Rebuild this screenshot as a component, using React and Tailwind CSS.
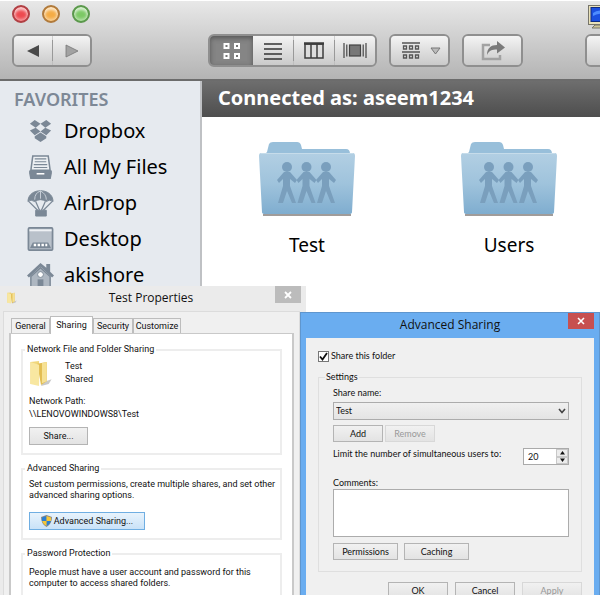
import React from "react";

function Light({ label, tone }) {
  return <button aria-label={label} className={`size-[18px] rounded-full border-2 shadow-[inset_0_3px_3px_rgba(255,255,255,0.7),inset_0_-2px_3px_rgba(255,255,255,0.45)] ${tone}`} />;
}

const toolButton = "flex items-center justify-center bg-linear-to-b from-[#f4f4f4] to-[#cacaca]";
const toolGroup = "flex h-[33px] shrink-0 overflow-hidden rounded-md border-2 border-[#8f8f8f]";

function Toolbar() {
  return (
    <header className="h-20 border-b-2 border-[#6c6c6c] bg-linear-to-b from-[#e8e8e8] to-[#b4b4b4]">
      <div className="flex h-[33px] items-start gap-3 px-3 pt-1">
        <Light label="Close" tone="border-[#b04044] bg-[#ee4a50]" />
        <Light label="Minimize" tone="border-[#b07a3c] bg-[#f5ac45]" />
        <Light label="Zoom" tone="border-[#5b984c] bg-[#7cc965]" />
        <svg viewBox="0 0 20 26" className="-mr-5 ml-auto h-[26px] w-5 shrink-0" aria-hidden="true">
          <rect x="0.5" y="0.5" width="30" height="19" fill="#e9e1b8" stroke="#77756a" />
          <rect x="3" y="2.500" width="28" height="14" fill="#1b4fe0" stroke="#102b80" />
          <path d="M5 8q5-4 14-2v4q-8-3-14 1z" fill="#4d8bff" />
          <path d="M7 20h14v3H4z" fill="#cfc59a" stroke="#77756a" />
        </svg>
      </div>
      <div className="flex pl-3">
        <div className={`${toolGroup} w-20`}>
          <button aria-label="Back" className={`${toolButton} w-[38px]`}>
            <svg width="14" height="14" viewBox="0 0 14 14"><path d="M13 1v12L1 7z" fill="#4a4a4a" /></svg>
          </button>
          <span className="my-1 w-px bg-[#999]" />
          <button aria-label="Forward" className={`${toolButton} flex-1`}>
            <svg width="14" height="14" viewBox="0 0 14 14"><path d="M1 1v12l12-6z" fill="#a2a2a2" stroke="#777" strokeWidth="0.8" /></svg>
          </button>
        </div>
        <div className={`${toolGroup} ml-[116px] w-[169px]`}>
          <button aria-label="Icon view" className="flex w-[43px] items-center justify-center bg-[#858585] shadow-[inset_0_2px_5px_#555]">
            <svg width="18" height="18" viewBox="0 0 18 18" fill="#777" stroke="#fff" strokeWidth="2"><path d="M1.500 2h4v4h-4zM12 2h4v4h-4zM1.500 12h4v4h-4zM12 12h4v4h-4z" /></svg>
          </button>
          <button aria-label="List view" className={`${toolButton} w-10`}>
            <svg width="18" height="18" viewBox="0 0 18 18" stroke="#333" strokeWidth="1.600"><path d="M0 2h18M0 7h18M0 12h18M0 17h18" /></svg>
          </button>
          <span className="my-1 w-px bg-[#999]" />
          <button aria-label="Column view" className={`${toolButton} w-10`}>
            <svg width="20" height="17" viewBox="0 0 20 17" fill="#ddd" stroke="#3c3c3c" strokeWidth="1.500"><path d="M1 2h18v14H1zM7 2v14M13 2v14" /><path d="M0 1.500h20" strokeWidth="2.500" /></svg>
          </button>
          <span className="my-1 w-px bg-[#999]" />
          <button aria-label="Cover flow view" className={`${toolButton} flex-1`}>
            <svg width="24" height="17" viewBox="0 0 24 17" stroke="#444" strokeWidth="1.200"><path d="M1 1v15M3.800 2.500v12M20.200 2.500v12M23 1v15" /><rect x="6.500" y="3" width="11" height="11" fill="#777" /></svg>
          </button>
        </div>
        <div className={`${toolGroup} ml-3 w-[61px]`}>
          <button aria-label="Arrange items" className={`${toolButton} w-full gap-2.5 pl-1`}>
            <svg width="18" height="18" viewBox="0 0 18 18" fill="none" stroke="#555" strokeWidth="1.300"><path d="M0 1h18M0 10h18M1.500 4h3v3h-3zM7.500 4h3v3h-3zM13.500 4h3v3h-3zM1.500 13h3v3h-3zM7.500 13h3v3h-3zM13.500 13h3v3h-3z" /></svg>
            <svg width="11" height="8" viewBox="0 0 11 8"><path d="M1 1h9L5.500 7z" fill="#bbb" stroke="#777" /></svg>
          </button>
        </div>
        <div className={`${toolGroup} ml-3 w-[61px]`}>
          <button aria-label="Share" className={`${toolButton} w-full`}>
            <svg width="26" height="22" viewBox="0 0 26 22"><path d="M10 5H3v14h17v-4" fill="none" stroke="#a2a2a2" strokeWidth="2.500" /><path d="M7 15C7 8 11 5 17 5V1l8 6.500-8 6V9.500c-5 0-8 1-10 5.500z" fill="#7a7a7a" /></svg>
          </button>
        </div>
        <div className="min-w-0 flex-1 overflow-hidden pl-[62px]">
          <div className={`${toolGroup} w-16`}><button aria-label="Actions" className={`${toolButton} w-full`} /></div>
        </div>
      </div>
    </header>
  );
}

const slate = "#7b8896";
const favorites = [
  ["Dropbox", <g fill={slate}><path d="M8 2l6 4-5 4-6-4zM20 2l-6 4 5 4 6-4zM3 13l6-3 5 4-6 4zM25 13l-6-3-5 4 6 4zM8 19l6-4 6 4v2l-6 4-6-4z" /></g>],
  ["All My Files", <g fill="#edf0f3" stroke={slate} strokeWidth="1.600"><path d="M6 2h16l2 15H4z" /><path d="M8 5h12M8 8h12M7 11h14M7 14h14" strokeWidth="1.200" /><path d="M3 18h22v2l-1 5H4l-1-5z" fill={slate} /><path d="M10 20.500h8" stroke="#fff" /></g>],
  ["AirDrop", <g fill={slate} stroke={slate}><path d="M1 12C1-3 27-3 27 12q-4-3-7 0-6-4-12 0-4-3-7 0z" /><path d="M8 10Q8 3 14 1q6 3 6 9M14 1v8" fill="none" stroke="#c9d0d8" /><path d="M2 12l9 9M26 12l-9 9M9 12l4 9M19 12l-4 9" fill="none" strokeWidth="1.300" /><path d="M9 21h11v6H9z" /></g>],
  ["Desktop", <g><rect x="1.500" y="2" width="25" height="23" rx="1" fill="#b9c1ca" stroke={slate} strokeWidth="1.800" /><path d="M2.500 4.500h23" stroke="#eef1f4" strokeWidth="2" /><path d="M6 17h16l3 6H3z" fill={slate} /><path d="M7 18.500h2.500v2.500H7zM11 18.500h2.500v2.500H11zM15 18.500h2.500v2.500H15zM19 18.500h2v2.500h-2z" fill="#fff" /></g>],
  ["akishore", <g fill={slate}><path d="M14 1L0 14l2 2L14 5l12 11 2-2-4-4V2h-4v4z" /><path d="M4 15L14 6l10 9v13H4z" fill="#aeb7c1" stroke={slate} strokeWidth="1.500" /><circle cx="14" cy="13" r="3" fill="#fff" stroke={slate} /><path d="M11 18h6v10h-6z" /></g>],
];

function Sidebar() {
  return (
    <nav className="w-[202px] shrink-0 border-r-2 border-[#bfc1c4] bg-[#e6eaef]">
      <h2 className="pt-1.5 pl-3.5 text-[18px] leading-6 font-semibold text-[#7d8896]">FAVORITES</h2>
      <ul className="pt-0.5">
        {favorites.map(([name, art]) => (
          <li key={name}>
            <a href="#" className="flex h-9 items-center gap-2.5 pl-[27px] text-[20px] text-black">
              <svg viewBox="0 0 28 28" className="size-[27px] shrink-0" aria-hidden="true">{art}</svg>
              {name}
            </a>
          </li>
        ))}
      </ul>
    </nav>
  );
}

function SharedFolder({ name }) {
  return (
    <button className="flex w-[202px] shrink-0 flex-col items-center text-[19px] leading-6 text-black">
      <svg width="98" height="76" viewBox="0 0 98 76" aria-hidden="true">
        <defs>
          <linearGradient id={`front-${name}`} x2="0" y2="1"><stop stopColor="#b2cfe3" /><stop offset="0.5" stopColor="#9fc3dc" /><stop offset="1" stopColor="#7fadcf" /></linearGradient>
        </defs>
        <path d="M5 73h88v2H5z" fill="#a09c9a" />
        <path d="M6 14l3-3 2-8q1-2 4-2h24q3 0 4 3l1 4h44q4 0 4 5v10H6z" fill="#98bfda" />
        <path d="M3 12h92q2 0 2 3l-3 56q0 2-3 2H7q-3 0-3-2L1 15q0-3 2-3z" fill={`url(#front-${name})`} />
        <path d="M3 12.500h92" stroke="#c6dcea" />
        <g fill="#7a9fbd">
          {[29, 48.5, 68].map((x) => (
            <g key={x} transform={`translate(${x} 0)`}>
              <circle cy="26" r="5" />
              <path d="M-3 31h6l7 8-2 3-5-4v7l6 17H5L0 50l-4 12h-5l5-17v-7l-4 4-2-3z" />
            </g>
          ))}
        </g>
      </svg>
      <span className="mt-4">{name}</span>
    </button>
  );
}

function Tiny({ children, className = "", ...rest }) {
  return <button className={`flex items-center justify-center border border-[#b4b4b4] bg-linear-to-b from-[#f1f1f1] to-[#e3e3e3] ${className}`} {...rest}>{children}</button>;
}

function YellowFolder({ className }) {
  return (
    <svg viewBox="0 0 24 28" className={className} aria-hidden="true">
      <path d="M14 23l9-3-3 5-8 2z" fill="#c9c9c9" />
      <path d="M1 2l9-1v22l-9 2z" fill="#f0d77c" />
      <path d="M8 4l10-2v20l-6 4z" fill="#e2bd52" />
      <path d="M1 2l9 3v22l-9-2z" fill="#f8e7a1" />
      <path d="M13 3l5-1v20l-5 2z" fill="#f6e194" />
    </svg>
  );
}

const groupBox = "mx-2.5 min-w-0 border-2 border-[#ededed] pb-2 pl-[6px]";
const groupLegend = "-ml-1 px-0.5";

function TestProperties() {
  const tabs = ["General", "Sharing", "Security", "Customize"];
  const widths = ["w-[39px]", "w-[43px]", "w-10", "w-12"];
  return (
    <section className="absolute top-[286px] bottom-0 left-0 flex w-[306px] flex-col bg-[#ebebeb] font-['Roboto','Liberation_Sans',sans-serif] text-[9px] leading-[13px] text-[#111]">
      <div className="relative h-[25px] shrink-0 text-center font-['Open_Sans',sans-serif] text-[12px] leading-6">
        <YellowFolder className="absolute top-1.5 left-1.5 h-3 w-3" />
        <h1 className="pr-1">Test Properties</h1>
        <button aria-label="Close properties" className="absolute top-0 right-[5px] flex h-[17px] w-[26px] items-center justify-center bg-[#bcbcbc]">
          <svg width="8" height="8" viewBox="0 0 8 8" stroke="#fff" strokeWidth="1.800"><path d="M1 1l6 6M7 1L1 7" /></svg>
        </button>
      </div>
      <div className="mr-1.5 ml-[3px] flex min-h-0 flex-1 flex-col border border-b-0 border-[#dcdcdc] bg-[#f0f0f0] px-[5px] pt-1">
        <div role="tablist" className="flex h-[17px] shrink-0 items-end pl-0.5">
          {tabs.map((t, i) => (
            <button key={t} role="tab" aria-selected={i === 1} className={`${widths[i]} border border-b-0 border-[#bdbdbd] ${i === 1 ? "relative z-10 -mb-px h-[18px] bg-white" : "h-[15px] bg-[#f0f0f0]"}`}>{t}</button>
          ))}
        </div>
        <div className="min-h-0 flex-1 overflow-hidden border-x-2 border-t border-[#c9c9c9] bg-white pt-[9px]">
          <fieldset className={groupBox}>
            <legend className={groupLegend}>Network File and Folder Sharing</legend>
            <div className="flex gap-3 pt-1">
              <YellowFolder className="h-[27px] w-6" />
              <p className="leading-[13px]">Test<br />Shared</p>
            </div>
            <p className="pt-2">Network Path:<br />\\LENOVOWINDOWS8\Test</p>
            <Tiny className="mt-1.5 h-[18px] w-[59px] border-[#9fb4c8]">Share...</Tiny>
          </fieldset>
          <fieldset className={`${groupBox} mt-[7px]`}>
            <legend className={groupLegend}>Advanced Sharing</legend>
            <p className="pt-1 leading-[11px]">Set custom permissions, create multiple shares, and set other<br />advanced sharing options.</p>
            <button className="mt-[11px] flex h-[18px] w-[116px] items-center justify-center gap-0.5 border border-[#6faee2] bg-linear-to-b from-[#e8f3fc] to-[#c9e2f8]">
              <svg width="11" height="12" viewBox="0 0 11 12" aria-hidden="true"><path d="M5.500 0L11 2q0 7-5.500 10Q0 9 0 2z" fill="#888" /><path d="M5.500 1v5H1V2.500z M5.500 6H10q-1 3-4.500 5z" fill="#2a7fd2" /><path d="M5.500 1L10 2.500V6H5.500zM1 6h4.500v5Q2 9 1 6z" fill="#f5c738" /></svg>
              Advanced Sharing...
            </button>
          </fieldset>
          <fieldset className={`${groupBox} mt-[7px]`}>
            <legend className={groupLegend}>Password Protection</legend>
            <p className="pt-[7px] leading-[11px]">People must have a user account and password for this<br />computer to access shared folders.</p>
          </fieldset>
        </div>
      </div>
    </section>
  );
}

function AdvancedSharing() {
  return (
    <section className="absolute top-[312px] right-0 bottom-0 left-[300px] flex flex-col overflow-hidden border border-b-0 border-[#5f96ce] bg-[#6aadf0] px-[5px] font-['Lato',sans-serif] text-[9px] leading-3 text-[#111]">
      <div className="relative h-[25px] shrink-0">
        <h1 className="text-center font-['Open_Sans',sans-serif] text-[12px] leading-6">Advanced Sharing</h1>
        <button aria-label="Close sharing" className="absolute top-0 right-0 flex h-4 w-[26px] items-center justify-center bg-[#c75050]">
          <svg width="8" height="8" viewBox="0 0 8 8" stroke="#fff" strokeWidth="1.600"><path d="M1 1l6 6M7 1L1 7" /></svg>
        </button>
      </div>
      <div className="min-h-0 flex-1 overflow-hidden bg-[#f0f0f0] px-3 pt-3">
        <label className="flex items-center gap-0.5">
          <span className="relative flex size-[11px]">
            <input type="checkbox" defaultChecked className="peer size-[11px] appearance-none border border-[#777] bg-white" />
            <svg viewBox="0 0 11 11" className="pointer-events-none absolute inset-0 hidden peer-checked:block" fill="none" stroke="#111" strokeWidth="1.800"><path d="M2 5.500l2.500 3L9 2" /></svg>
          </span>
          Share this folder
        </label>
        <fieldset className="mt-[9px] min-w-0 border border-[#dfdfdf] pr-3 pb-[11px] pl-3.5">
          <legend className="-ml-2 px-px">Settings</legend>
          <label htmlFor="share-name" className="mt-1 block">Share name:</label>
          <div className="relative mt-[3px]">
            <select id="share-name" className="block h-[18px] w-full appearance-none border border-[#acacac] bg-linear-to-b from-[#f0f0f0] to-[#e4e4e4] px-0.5"><option>Test</option></select>
            <svg width="8" height="6" viewBox="0 0 8 6" className="pointer-events-none absolute top-1.5 right-[3px]" fill="none" stroke="#444" strokeWidth="1.600"><path d="M1 1l3 3.500L7 1" /></svg>
          </div>
          <div className="mt-[5px] flex gap-0.5">
            <Tiny className="h-[17px] w-[50px]">Add</Tiny>
            <Tiny disabled className="h-[17px] w-[50px] border-[#d8d8d8] text-[#999]">Remove</Tiny>
          </div>
          <div className="mt-1.5 flex items-start justify-between">
            <label htmlFor="limit">Limit the number of simultaneous users to:</label>
            <div className="flex h-[17px] w-[46px] border border-[#aaa] bg-white">
              <input id="limit" type="text" defaultValue="20" className="w-8 bg-white pl-1" />
              <div className="flex flex-1 flex-col">
                {["Increase", "Decrease"].map((n, i) => (
                  <button key={n} aria-label={n} className="flex flex-1 items-center justify-center border border-[#c8c8c8] bg-[#ececec]">
                    <svg width="5" height="4" viewBox="0 0 5 4"><path d={i ? "M0 .5h5L2.500 4z" : "M0 3.500h5L2.500 0z"} fill="#111" /></svg>
                  </button>
                ))}
              </div>
            </div>
          </div>
          <label htmlFor="comments" className="mt-3 block">Comments:</label>
          <textarea id="comments" className="block h-12 w-full resize-none border border-[#acacac] bg-white" />
          <div className="mt-1.5 flex gap-1.5">
            <Tiny className="h-[17px] w-[65px]">Permissions</Tiny>
            <Tiny className="h-[17px] w-[65px]">Caching</Tiny>
          </div>
        </fieldset>
        <div className="mt-2.5 flex justify-end gap-[7px]">
          <Tiny className="h-[17px] w-[60px] border-[#4c9be8]">OK</Tiny>
          <Tiny className="h-[17px] w-[60px]">Cancel</Tiny>
          <Tiny disabled className="h-[17px] w-[60px] border-[#d8d8d8] text-[#999]">Apply</Tiny>
        </div>
      </div>
    </section>
  );
}

export default function App() {
  return (
    <div className="h-screen overflow-hidden bg-white pr-1 pb-0.5 font-['Noto_Sans',sans-serif]">
      <div className="relative flex h-full flex-col overflow-hidden pt-px">
        <Toolbar />
        <div className="flex min-h-0 flex-1">
          <Sidebar />
          <main className="min-w-0 flex-1 overflow-hidden bg-white">
            <h2 className="h-9 bg-linear-to-b from-[#6e6e6e] to-[#4e4e4e] pl-4 text-[20px] leading-[34px] font-bold text-white">Connected as: aseem1234</h2>
            <div className="flex pt-6 pl-1">
              <SharedFolder name="Test" />
              <SharedFolder name="Users" />
            </div>
          </main>
        </div>
        <TestProperties />
        <AdvancedSharing />
      </div>
    </div>
  );
}
